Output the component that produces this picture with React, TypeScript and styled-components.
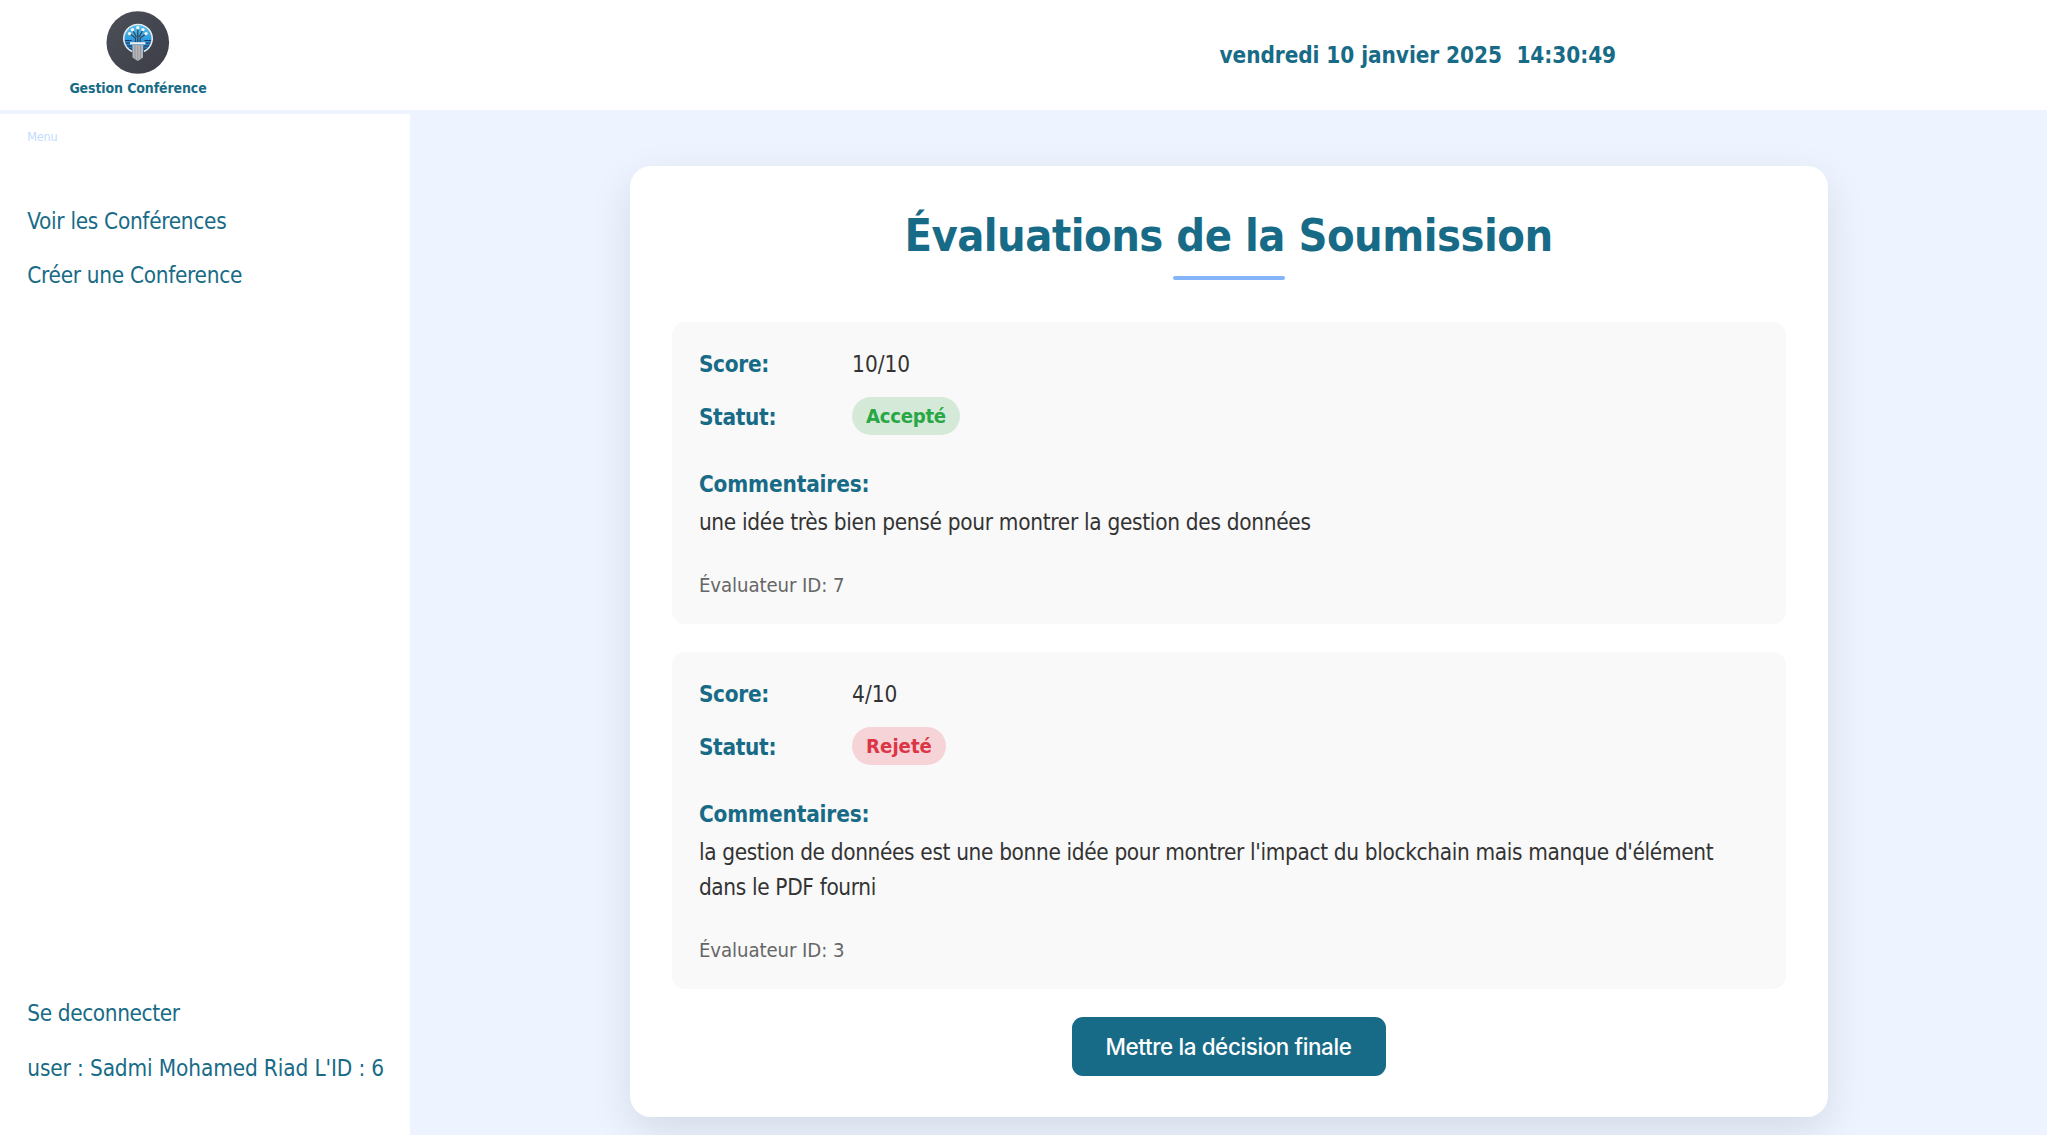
import React from 'react';
import styled, { createGlobalStyle } from 'styled-components';

const GlobalStyle = createGlobalStyle`
  * { box-sizing: border-box; }
  body {
    margin: 0;
    background: #edf4ff;
    font-family: "DejaVu Sans Condensed", "DejaVu Sans", sans-serif;
    font-size: 22.4px;
    color: #333;
    overflow: hidden;
  }
`;

const Page = styled.div`
  display: flex;
  flex-direction: column;
  height: 1135px;
`;

const Header = styled.header`
  display: flex;
  flex: none;
  height: 110px;
  background: #fff;
`;

const Brand = styled.div`
  display: flex;
  flex-direction: column;
  align-items: center;
  width: 276px;
  padding-top: 11px;
`;

const BrandName = styled.span`
  margin-top: 3.4px;
  font-size: 14px;
  line-height: 20px;
  font-weight: bold;
  letter-spacing: -0.12px;
  color: #186b87;
`;

const Clock = styled.div`
  display: flex;
  flex: 1;
  align-items: center;
  gap: 14.5px;
  padding-left: 943.5px;
  font-weight: bold;
  letter-spacing: -0.07px;
  color: #186b87;
  white-space: nowrap;
`;

const Body = styled.div`
  display: flex;
  flex: 1;
  min-height: 0;
`;

const Sidebar = styled.nav`
  display: flex;
  flex-direction: column;
  width: 410px;
  margin-top: 4px;
  padding: 13px 0 40px 27.3px;
  background: #fff;
`;

const MenuTitle = styled.span`
  height: 66.5px;
  font-size: 12.5px;
  line-height: 19px;
  letter-spacing: -0.2px;
  color: #c4dcff;
`;

const NavLink = styled.a<{ $tracking?: number }>`
  display: flex;
  align-items: center;
  height: 54.5px;
  color: #186b87;
  letter-spacing: ${(p) => p.$tracking ?? -0.3}px;
  white-space: nowrap;
`;

const Spacer = styled.div`
  flex: 1;
`;

const Main = styled.main`
  display: flex;
  flex: 1;
  align-items: flex-start;
  justify-content: center;
  padding-top: 56px;
`;

const Card = styled.section`
  display: flex;
  flex-direction: column;
  align-items: center;
  width: 1198px;
  height: 951px;
  padding: 41px 42px 0;
  border-radius: 21px;
  background: #fff;
  box-shadow: 0 14px 42px rgba(0, 0, 0, 0.1);
`;

const Title = styled.h1`
  margin: 0;
  font-size: 44.8px;
  line-height: 58px;
  letter-spacing: -0.52px;
  color: #186b87;
`;

const Underline = styled.div`
  width: 112px;
  height: 4px;
  margin: 11px 0 42px;
  border-radius: 2px;
  background: #86b4fa;
`;

const Evaluation = styled.article`
  width: 1114px;
  margin-bottom: 28.3px;
  padding: 28px 28px 21px 27.4px;
  border-radius: 13px;
  background: #f9f9f9;
`;

const Field = styled.div`
  display: flex;
  align-items: center;
  height: 28px;
  line-height: 28px;

  & + & {
    height: 37.7px;
    margin-top: 19px;
  }
  & + & > strong {
    padding-top: 2px;
  }
`;

const Label = styled.strong`
  width: 153.2px;
  color: #186b87;
  letter-spacing: -0.3px;
`;

const Badge = styled.span<{ $accepted: boolean }>`
  display: flex;
  align-items: center;
  height: 37.7px;
  padding: 0 14px;
  border-radius: 20px;
  font-size: 20.2px;
  font-weight: bold;
  letter-spacing: ${(p) => (p.$accepted ? -0.3 : 0)}px;
  color: ${(p) => (p.$accepted ? '#28a745' : '#dc3545')};
  background: ${(p) => (p.$accepted ? '#d4e9d8' : '#f6d3d6')};
`;

const CommentLabel = styled.strong`
  display: block;
  margin-top: 32.5px;
  line-height: 35px;
  letter-spacing: -0.14px;
  color: #186b87;
`;

const Comment = styled.p<{ $tracking: number }>`
  margin: 2.5px 0 0;
  line-height: 35px;
  letter-spacing: ${(p) => p.$tracking}px;
`;

const Evaluator = styled.p`
  margin: 28px 0 0;
  font-size: 20.2px;
  line-height: 35px;
  letter-spacing: -0.08px;
  color: #666;
`;

const Decision = styled.button`
  width: 314px;
  height: 59px;
  border: 0;
  border-radius: 11px;
  background: #186b87;
  color: #fff;
  font: 500 22.4px Inter, sans-serif;
  letter-spacing: -0.37px;
`;

const Logo = () => (
  <svg width="64" height="64" viewBox="0 0 64 64">
    <defs>
      <linearGradient id="sky" x1="0" y1="0" x2="0" y2="1">
        <stop offset="0" stopColor="#55c3ee" />
        <stop offset="0.55" stopColor="#2f9be0" />
        <stop offset="1" stopColor="#24568c" />
      </linearGradient>
      <linearGradient id="disc" x1="0" y1="0" x2="1" y2="1">
        <stop offset="0" stopColor="#4d5058" />
        <stop offset="1" stopColor="#3c3d47" />
      </linearGradient>
    </defs>
    <circle cx="31.8" cy="31.5" r="31.3" fill="url(#disc)" />
    <circle cx="32" cy="27.6" r="14.2" fill="url(#sky)" />
    <path d="M18.500 29.500h7M38.500 29.500h7M19 32h6M39 32h6M21 35h5M38 35h5M23 38h3M38 38h3" stroke="#173a66" strokeWidth="1.2" />
    <path d="M26 40.500A14.200 14.200 0 1 1 38 40.500" stroke="#e6eaee" strokeWidth="1.6" fill="none" />
    <path d="M29.500 31v-4l-5.500-4M31.800 31V17M34.200 31v-4l5.500-4M30.500 26l-4-7M33 26l4-7" stroke="#34465c" strokeWidth="1.3" fill="none" />
    <g fill="#f4f6f8">
      <circle cx="23.500" cy="22.600" r="1.700" />
      <circle cx="26.500" cy="18.700" r="1.700" />
      <circle cx="31.800" cy="16.700" r="1.700" />
      <circle cx="37" cy="18.600" r="1.700" />
      <circle cx="40" cy="22.600" r="1.700" />
    </g>
    <path d="M24 31.200h15.500v2.200H24z" fill="#eceef0" />
    <path d="M26.500 34h10.500v12.500L31.800 50l-5.300-3.500z" fill="#b4b6ba" />
    <path d="M29 34v13.500M31.800 34v15M34.500 34v13.500" stroke="#85888e" strokeWidth=".7" />
  </svg>
);

const evaluations = [
  {
    score: 10,
    accepted: true,
    comment: 'une idée très bien pensé pour montrer la gestion des données',
    tracking: -0.29,
    id: 7,
  },
  {
    score: 4,
    accepted: false,
    comment:
      "la gestion de données est une bonne idée pour montrer l'impact du blockchain mais manque d'élément dans le PDF fourni",
    tracking: -0.34,
    id: 3,
  },
];

export default function App() {
  return (
    <Page>
      <GlobalStyle />
      <Header>
        <Brand>
          <Logo />
          <BrandName>Gestion Conférence</BrandName>
        </Brand>
        <Clock>
          <span>vendredi 10 janvier 2025</span>
          <span>14:30:49</span>
        </Clock>
      </Header>
      <Body>
        <Sidebar>
          <MenuTitle>Menu</MenuTitle>
          <NavLink>Voir les Conférences</NavLink>
          <NavLink>Créer une Conference</NavLink>
          <Spacer />
          <NavLink $tracking={-0.38}>Se deconnecter</NavLink>
          <NavLink $tracking={-0.12}>user : Sadmi Mohamed Riad L'ID : 6</NavLink>
        </Sidebar>
        <Main>
          <Card>
            <Title>Évaluations de la Soumission</Title>
            <Underline />
            {evaluations.map((e) => (
              <Evaluation key={e.id}>
                <Field>
                  <Label>Score:</Label>
                  <span>{e.score}/10</span>
                </Field>
                <Field>
                  <Label>Statut:</Label>
                  <Badge $accepted={e.accepted}>{e.accepted ? 'Accepté' : 'Rejeté'}</Badge>
                </Field>
                <CommentLabel>Commentaires:</CommentLabel>
                <Comment $tracking={e.tracking}>{e.comment}</Comment>
                <Evaluator>Évaluateur ID: {e.id}</Evaluator>
              </Evaluation>
            ))}
            <Decision>Mettre la décision finale</Decision>
          </Card>
        </Main>
      </Body>
    </Page>
  );
}
